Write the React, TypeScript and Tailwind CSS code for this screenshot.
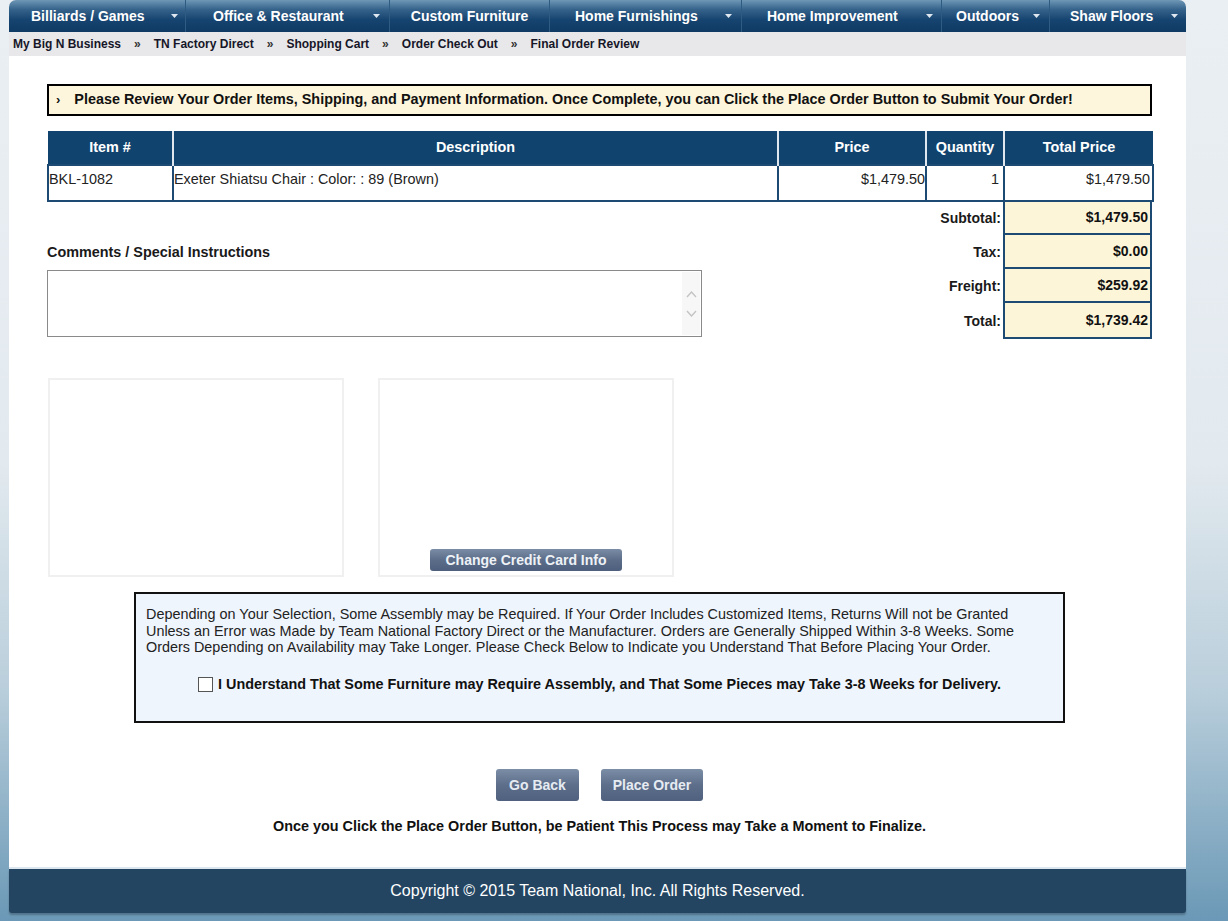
import React from 'react'

const navItems = [
  { label: 'Billiards / Games', w: 'w-[176px]', pl: 'pl-[22px]', arrow: true, mr: 'mr-[7px]' },
  { label: 'Office & Restaurant', w: 'w-[204px]', pl: 'pl-[27px]', arrow: true, mr: 'mr-[9px]' },
  { label: 'Custom Furniture', w: 'w-[160px]', pl: 'justify-center', arrow: false, mr: '' },
  { label: 'Home Furnishings', w: 'w-[192px]', pl: 'pl-[25px]', arrow: true, mr: 'mr-[9px]' },
  { label: 'Home Improvement', w: 'w-[200px]', pl: 'pl-[25px]', arrow: true, mr: 'mr-[8px]' },
  { label: 'Outdoors', w: 'w-[108px]', pl: 'pl-[14px]', arrow: true, mr: 'mr-[9px]' },
  { label: 'Shaw Floors', w: 'w-[136px]', pl: 'pl-[20px]', arrow: true, mr: 'mr-[7px]' },
]

const crumbs = ['My Big N Business', 'TN Factory Direct', 'Shopping Cart', 'Order Check Out', 'Final Order Review']

const totals = [
  { label: 'Subtotal:', value: '$1,479.50', h: 'h-[33px]' },
  { label: 'Tax:', value: '$0.00', h: 'h-[34px]' },
  { label: 'Freight:', value: '$259.92', h: 'h-[34px]' },
  { label: 'Total:', value: '$1,739.42', h: 'h-[36px]' },
]

function Caret() {
  return (
    <svg width="7" height="4" viewBox="0 0 7 4" className="shrink-0">
      <path d="M0 0 L7 0 L3.5 4 Z" fill="#dfe8f0" />
    </svg>
  )
}

export default function App() {
  return (
    <div
      className="min-h-[921px] w-full bg-[linear-gradient(180deg,#eaeff3_0%,#e3eaef_50%,#b9cedb_75%,#6a98b6_100%)] pb-[9px] text-[14.4px] text-[#111]"
      style={{ fontFamily: '"Liberation Sans", Arial, sans-serif' }}
    >
      <div className="ml-[9px] w-[1177px]">
        {/* Top nav */}
        <div className="flex h-[32px] rounded-t-[7px] bg-[linear-gradient(180deg,#6f97b6_0%,#34628a_30%,#164470_62%,#0e3a63_100%)]">
          {navItems.map((n, i) => (
            <div
              key={n.label}
              className={`${n.w} flex items-center ${n.pl} ${i > 0 ? 'border-l border-l-[#2e5b82]' : ''}`}
            >
              <span className="text-[14px] font-bold text-white whitespace-nowrap">{n.label}</span>
              {n.arrow && (
                <span className={`ml-auto ${n.mr} flex`}>
                  <Caret />
                </span>
              )}
            </div>
          ))}
        </div>

        {/* Breadcrumbs */}
        <div className="flex h-[24px] items-center bg-[#e8e8ea] pl-[4px] text-[12px] font-bold text-[#161628]">
          {crumbs.map((c, i) => (
            <React.Fragment key={c}>
              {i > 0 && <span className="mx-[13px] text-[12px] text-[#333]">»</span>}
              <span className="whitespace-nowrap">{c}</span>
            </React.Fragment>
          ))}
        </div>

        {/* Main content */}
        <div className="bg-white pb-[32px] pl-[38px] pr-[34px] pt-[28px]">
          <div className="flex h-[32px] items-center border-2 border-black bg-[#fef6dc] pl-[7px] text-[14.4px] font-bold whitespace-nowrap">
            <span className="mr-[14px] text-[13px]">›</span>
            Please Review Your Order Items, Shipping, and Payment Information. Once Complete, you can Click the Place Order Button to Submit Your Order!
          </div>

          {/* Items table */}
          <table className="mt-[15px] w-[1105px] table-fixed border-collapse">
            <colgroup>
              <col className="w-[125px]" />
              <col className="w-[605px]" />
              <col className="w-[148px]" />
              <col className="w-[78px]" />
              <col className="w-[149px]" />
            </colgroup>
            <thead>
              <tr className="h-[34px] bg-[#10446f] text-[14.4px] font-bold text-white">
                <th className="border-r-2 border-r-[#dfe6ee] font-bold">Item #</th>
                <th className="border-r-2 border-r-[#dfe6ee] font-bold">Description</th>
                <th className="border-r-2 border-r-[#dfe6ee] font-bold">Price</th>
                <th className="border-r-2 border-r-[#dfe6ee] font-bold">Quantity</th>
                <th className="font-bold">Total Price</th>
              </tr>
            </thead>
            <tbody>
              <tr className="h-[36px] align-top text-[14.4px] text-[#222]">
                <td className="border-2 border-[#1c4a72] pl-0 pt-[3px]">BKL-1082</td>
                <td className="border-2 border-[#1c4a72] pl-0 pt-[3px]">Exeter Shiatsu Chair : Color: : 89 (Brown)</td>
                <td className="border-2 border-[#1c4a72] pr-0 pt-[3px] text-right">$1,479.50</td>
                <td className="border-2 border-[#1c4a72] pr-[4px] pt-[3px] text-right">1</td>
                <td className="border-2 border-[#1c4a72] pr-[2px] pt-[3px] text-right">$1,479.50</td>
              </tr>
            </tbody>
          </table>

          {/* Comments + totals */}
          <div className="flex items-start">
            <div className="w-[655px] pt-[41px]">
              <div className="text-[14.4px] font-bold leading-[18px] text-[#1a1a1a]">Comments / Special Instructions</div>
              <div className="relative mt-[9px] h-[67px] w-[655px] border border-[#8a8a8a] bg-white">
                <div className="absolute right-[1px] top-[1px] flex h-[63px] w-[18px] flex-col items-center justify-center gap-[12px] bg-[#f7f7f7]">
                  <svg width="11" height="7" viewBox="0 0 11 7"><path d="M1 6 L5.5 1 L10 6" fill="none" stroke="#c4c4c4" strokeWidth="1.4" /></svg>
                  <svg width="11" height="7" viewBox="0 0 11 7"><path d="M1 1 L5.5 6 L10 1" fill="none" stroke="#c4c4c4" strokeWidth="1.4" /></svg>
                </div>
              </div>
            </div>
            <div className="ml-auto flex w-[302px] flex-col">
              {totals.map((t) => (
                <div key={t.label} className={`flex ${t.h}`}>
                  <div className="flex w-[153px] items-center justify-end pr-[2px] text-[14px] font-bold text-[#1a1a1a]">{t.label}</div>
                  <div className="flex w-[149px] items-center justify-end border-x-2 border-b-2 border-[#1c4a72] bg-[#fdf5d8] pr-[2px] text-[14px] font-bold">
                    {t.value}
                  </div>
                </div>
              ))}
            </div>
          </div>

          {/* Address / payment boxes */}
          <div className="ml-[1px] mt-[39px] flex gap-[34px]">
            <div className="h-[199px] w-[296px] border-2 border-[#f0f0f0]" />
            <div className="flex h-[199px] w-[296px] flex-col items-center justify-end border-2 border-[#f0f0f0] pb-[4px]">
              <button className="h-[22px] w-[192px] rounded-[3px] bg-[linear-gradient(180deg,#7b8ca5_0%,#5b6d89_50%,#4d5f7c_100%)] text-[14px] font-bold text-[#eef2f7]">
                Change Credit Card Info
              </button>
            </div>
          </div>

          {/* Disclaimer */}
          <div className="mx-auto mt-[15px] h-[131px] w-[931px] border-2 border-[#111] bg-[#eff5fc] px-[10px] pt-[12px]">
            <p className="text-[14.4px] leading-[16.5px] text-[#222]">
              Depending on Your Selection, Some Assembly may be Required. If Your Order Includes Customized Items, Returns Will not be Granted Unless an Error was Made by Team National Factory Direct or the Manufacturer. Orders are Generally Shipped Within 3-8 Weeks. Some Orders Depending on Availability may Take Longer. Please Check Below to Indicate you Understand That Before Placing Your Order.
            </p>
            <label className="mt-[20px] flex h-[18px] items-center justify-center gap-[5px] text-[14.4px] font-bold text-[#111]">
              <span className="h-[15px] w-[15px] border border-[#555] bg-white" />
              I Understand That Some Furniture may Require Assembly, and That Some Pieces may Take 3-8 Weeks for Delivery.
            </label>
          </div>

          {/* Buttons */}
          <div className="mt-[46px] flex justify-center gap-[22px]">
            <button className="h-[32px] w-[83px] rounded-[3px] bg-[linear-gradient(180deg,#7c8da6_0%,#5c6e8a_50%,#4f617e_100%)] text-[14px] font-bold text-[#e6ebf2]">
              Go Back
            </button>
            <button className="h-[32px] w-[102px] rounded-[3px] bg-[linear-gradient(180deg,#7c8da6_0%,#5c6e8a_50%,#4f617e_100%)] text-[14px] font-bold text-[#e6ebf2]">
              Place Order
            </button>
          </div>
          <div className="mt-[16px] text-center text-[14.4px] font-bold leading-[18px] text-[#111]">
            Once you Click the Place Order Button, be Patient This Process may Take a Moment to Finalize.
          </div>
        </div>

        {/* Footer */}
        <div className="h-[2px] bg-[#dce6ee]" />
        <div className="flex h-[44px] items-center justify-center rounded-b-[3px] bg-[#234562] text-[16px] text-white shadow-[0_2px_2px_rgba(0,0,0,0.25)]">
          Copyright © 2015 Team National, Inc. All Rights Reserved.
        </div>
      </div>
    </div>
  )
}
